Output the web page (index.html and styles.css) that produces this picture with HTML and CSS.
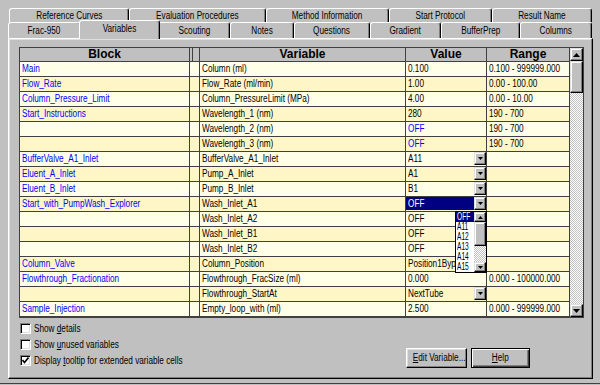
FILE: index.html
```html
<!DOCTYPE html>
<html>
	<head>
		<meta http-equiv="content-type" content="text/html;charset=UTF-8" />
		<link rel="stylesheet" href="styles.css">
	</head>

	<body>
		<div class="window">
			<div class="tabs">
				<div class="tabRow back">
					<span class="tab tRef"><span class="t">Reference Curves</span></span>
					<span class="tab tEval"><span class="t">Evaluation Procedures</span></span>
					<span class="tab tMeth"><span class="t">Method Information</span></span>
					<span class="tab tStart"><span class="t">Start Protocol</span></span>
					<span class="tab tRes"><span class="t">Result Name</span></span>
				</div>
				<div class="tabRow front">
					<span class="tab tFrac"><span class="t">Frac-950</span></span>
					<span class="tab tVar active"><span class="t">Variables</span></span>
					<span class="tab tScout"><span class="t">Scouting</span></span>
					<span class="tab tNotes"><span class="t">Notes</span></span>
					<span class="tab tQuest"><span class="t">Questions</span></span>
					<span class="tab tGrad"><span class="t">Gradient</span></span>
					<span class="tab tBuf"><span class="t">BufferPrep</span></span>
					<span class="tab tCol"><span class="t">Columns</span></span>
				</div>
			</div>
			<div class="panel">
				<div class="grid">
					<div class="table">
						<div class="row head">
							<span class="cell">Block</span>
							<span class="cell"></span>
							<span class="cell">Variable</span>
							<span class="cell">Value</span>
							<span class="cell">Range</span>
						</div>
						<div class="row">
							<span class="cell blk"><span class="t">Main</span></span>
							<span class="cell"></span>
							<span class="cell"><span class="t">Column (ml)</span></span>
							<span class="cell"><span class="t">0.100</span></span>
							<span class="cell"><span class="t">0.100 - 999999.000</span></span>
						</div>
						<div class="row">
							<span class="cell blk"><span class="t">Flow_Rate</span></span>
							<span class="cell"></span>
							<span class="cell"><span class="t">Flow_Rate (ml/min)</span></span>
							<span class="cell"><span class="t">1.00</span></span>
							<span class="cell"><span class="t">0.00 - 100.00</span></span>
						</div>
						<div class="row">
							<span class="cell blk"><span class="t">Column_Pressure_Limit</span></span>
							<span class="cell"></span>
							<span class="cell"><span class="t">Column_PressureLimit (MPa)</span></span>
							<span class="cell"><span class="t">4.00</span></span>
							<span class="cell"><span class="t">0.00 - 10.00</span></span>
						</div>
						<div class="row">
							<span class="cell blk"><span class="t">Start_Instructions</span></span>
							<span class="cell"></span>
							<span class="cell"><span class="t">Wavelength_1 (nm)</span></span>
							<span class="cell"><span class="t">280</span></span>
							<span class="cell"><span class="t">190 - 700</span></span>
						</div>
						<div class="row">
							<span class="cell"></span>
							<span class="cell"></span>
							<span class="cell"><span class="t">Wavelength_2 (nm)</span></span>
							<span class="cell blk"><span class="t">OFF</span></span>
							<span class="cell"><span class="t">190 - 700</span></span>
						</div>
						<div class="row">
							<span class="cell"></span>
							<span class="cell"></span>
							<span class="cell"><span class="t">Wavelength_3 (nm)</span></span>
							<span class="cell blk"><span class="t">OFF</span></span>
							<span class="cell"><span class="t">190 - 700</span></span>
						</div>
						<div class="row">
							<span class="cell blk"><span class="t">BufferValve_A1_Inlet</span></span>
							<span class="cell"></span>
							<span class="cell"><span class="t">BufferValve_A1_Inlet</span></span>
							<span class="cell combo"><span class="txt"><span class="t">A11</span></span><span class="ddBtn"><svg width="5" height="3"><polygon points="0,0 5,0 2.5,3"/></svg></span></span>
							<span class="cell"></span>
						</div>
						<div class="row">
							<span class="cell blk"><span class="t">Eluent_A_Inlet</span></span>
							<span class="cell"></span>
							<span class="cell"><span class="t">Pump_A_Inlet</span></span>
							<span class="cell combo"><span class="txt"><span class="t">A1</span></span><span class="ddBtn"><svg width="5" height="3"><polygon points="0,0 5,0 2.5,3"/></svg></span></span>
							<span class="cell"></span>
						</div>
						<div class="row">
							<span class="cell blk"><span class="t">Eluent_B_Inlet</span></span>
							<span class="cell"></span>
							<span class="cell"><span class="t">Pump_B_Inlet</span></span>
							<span class="cell combo"><span class="txt"><span class="t">B1</span></span><span class="ddBtn"><svg width="5" height="3"><polygon points="0,0 5,0 2.5,3"/></svg></span></span>
							<span class="cell"></span>
						</div>
						<div class="row">
							<span class="cell blk"><span class="t">Start_with_PumpWash_Explorer</span></span>
							<span class="cell"></span>
							<span class="cell"><span class="t">Wash_Inlet_A1</span></span>
							<span class="cell combo sel"><span class="txt"><span class="t">OFF</span></span><span class="ddBtn"><svg width="5" height="3"><polygon points="0,0 5,0 2.5,3"/></svg></span></span>
							<span class="cell"></span>
						</div>
						<div class="row">
							<span class="cell"></span>
							<span class="cell"></span>
							<span class="cell"><span class="t">Wash_Inlet_A2</span></span>
							<span class="cell"><span class="t">OFF</span></span>
							<span class="cell"></span>
						</div>
						<div class="row">
							<span class="cell"></span>
							<span class="cell"></span>
							<span class="cell"><span class="t">Wash_Inlet_B1</span></span>
							<span class="cell"><span class="t">OFF</span></span>
							<span class="cell"></span>
						</div>
						<div class="row">
							<span class="cell"></span>
							<span class="cell"></span>
							<span class="cell"><span class="t">Wash_Inlet_B2</span></span>
							<span class="cell"><span class="t">OFF</span></span>
							<span class="cell"></span>
						</div>
						<div class="row">
							<span class="cell blk"><span class="t">Column_Valve</span></span>
							<span class="cell"></span>
							<span class="cell"><span class="t">Column_Position</span></span>
							<span class="cell"><span class="t">Position1Byp</span></span>
							<span class="cell"></span>
						</div>
						<div class="row">
							<span class="cell blk"><span class="t">Flowthrough_Fractionation</span></span>
							<span class="cell"></span>
							<span class="cell"><span class="t">Flowthrough_FracSize (ml)</span></span>
							<span class="cell"><span class="t">0.000</span></span>
							<span class="cell"><span class="t">0.000 - 100000.000</span></span>
						</div>
						<div class="row">
							<span class="cell"></span>
							<span class="cell"></span>
							<span class="cell"><span class="t">Flowthrough_StartAt</span></span>
							<span class="cell combo"><span class="txt"><span class="t">NextTube</span></span><span class="ddBtn"><svg width="5" height="3"><polygon points="0,0 5,0 2.5,3"/></svg></span></span>
							<span class="cell"></span>
						</div>
						<div class="row">
							<span class="cell blk"><span class="t">Sample_Injection</span></span>
							<span class="cell"></span>
							<span class="cell"><span class="t">Empty_loop_with (ml)</span></span>
							<span class="cell"><span class="t">2.500</span></span>
							<span class="cell"><span class="t">0.000 - 999999.000</span></span>
						</div>
					</div>
					<div class="vscroll">
						<span class="sBtn"><svg width="7" height="4"><polygon points="0,4 7,4 3.5,0"/></svg></span>
						<span class="thumb"></span>
						<span class="track"></span>
						<span class="sBtn"><svg width="7" height="4"><polygon points="0,0 7,0 3.5,4"/></svg></span>
					</div>
					<div class="dropList">
						<div class="items">
							<span class="on"><span class="t">OFF</span></span>
							<span><span class="t">A11</span></span>
							<span><span class="t">A12</span></span>
							<span><span class="t">A13</span></span>
							<span><span class="t">A14</span></span>
							<span><span class="t">A15</span></span>
						</div>
						<div class="miniScroll">
							<span class="mBtn"><svg width="5" height="3"><polygon points="0,3 5,3 2.5,0"/></svg></span>
							<span class="mThumb"></span>
							<span class="track"></span>
							<span class="mBtn"><svg width="5" height="3"><polygon points="0,0 5,0 2.5,3"/></svg></span>
						</div>
					</div>
				</div>
				<div class="bottom">
					<div class="checks">
						<label class="check"><span class="box"></span><span class="t">Show <u>d</u>etails</span></label>
						<label class="check"><span class="box"></span><span class="t">Show <u>u</u>nused variables</span></label>
						<label class="check"><span class="box"><svg width="7" height="7"><polyline points="0.5,3 2.5,5.5 6.5,0.5" fill="none" stroke="#000" stroke-width="1.6"/></svg></span><span class="t">Display <u>t</u>ooltip for extended variable cells</span></label>
					</div>
					<div class="buttons">
						<span class="btn edit"><span class="t"><u>E</u>dit Variable...</span></span>
						<span class="btn help"><span class="t"><u>H</u>elp</span></span>
					</div>
				</div>
			</div>
		</div>
	</body>
</html>
```

FILE: styles.css
```css
body{
	margin:0;
	background-color:#c0c0c0;
	font-family:"Liberation Sans",Arial,sans-serif;
	font-size:10px;
	color:#000;
}
/* the dialog font is a narrow one: squeeze the sans text to its width */
.t{
	display:inline-block;
	transform:scaleX(.82);
	transform-origin:0 50%;
	white-space:nowrap;
}
.window{
	width:600px;
	height:385px;
	overflow:hidden;
	box-shadow:inset 0 -1px #c0c0c0, inset 0 -2px #404040;
}

/* tabs */
.tabs{
	padding-top:8px;
	height:30px;
}
.tabRow{
	display:flex;
}
.tabRow.back{
	margin-left:9px;
	height:14px;
}
.tabRow.front{
	margin-left:8px;
	height:16px;
}
.tab{
	box-sizing:border-box;
	height:100%;
	border-top:1px solid #fff;
	border-left:1px solid #fff;
	border-right:1px solid #000;
	border-radius:3px 3px 0 0;
	box-shadow:inset -1px 0 #808080;
	text-align:center;
	white-space:nowrap;
}
.tab .t{
	transform-origin:50% 50%;
}
.back .tab{
	line-height:12px;
	padding-top:1px;
}
.front .tab{
	line-height:15px;
}
.tab.active{
	position:relative;
	z-index:2;
	height:19px;
	margin:-2px -2px 0 -2px;
	background-color:#c0c0c0;
}
.tRef{width:120px;}
.tEval{width:137px;}
.tMeth{width:123px;}
.tStart{width:103px;}
.tRes{width:100px;}
.tFrac{width:73px;}
.tVar{width:81px;}
.tScout{width:72px;}
.tNotes{width:64px;}
.tQuest{width:76px;}
.tGrad{width:71px;}
.tBuf{width:79px;}
.tCol{width:72px;}

/* page */
.panel{
	margin-left:8px;
	width:585px;
	box-sizing:border-box;
	padding:8px 8px 10px 10px;
	border:1px solid;
	border-color:#fff #000 #000 #fff;
	box-shadow:inset -1px -1px #808080, inset 1px 1px #dfdfdf;
}

/* grid */
.grid{
	position:relative;
	display:flex;
	border:1px solid #404040;
}
.table{
	width:550px;
}
.row{
	display:grid;
	grid-template-columns:170px 10px 206px 81px 83px;
	height:15px;
	background-color:#ffffe8;
}
.row:nth-child(odd){
	background-color:#fff6c8;
}
.row.head{
	height:14px;
	background-color:#c0c0c0;
	font-weight:bold;
	font-size:12px;
}
.cell{
	box-sizing:border-box;
	border-right:1px solid #404040;
	border-bottom:1px solid #404040;
	padding:0 2px;
	line-height:14px;
	white-space:nowrap;
	overflow:hidden;
}
.head .cell{
	text-align:center;
	line-height:13px;
}
.head .cell:nth-child(2){
	box-shadow:inset 2px 0 #c0c0c0, inset 3px 0 #404040;
}
.blk{
	color:#0000ff;
}
.cell.combo{
	display:flex;
	padding:0;
}
.combo .txt{
	flex-grow:1;
	padding-left:2px;
}
.combo.sel .txt{
	background-color:#000080;
	color:#fff;
	margin-bottom:1px;
	line-height:13px;
}
.ddBtn,.sBtn,.mBtn{
	box-sizing:border-box;
	display:flex;
	justify-content:center;
	align-items:center;
	background-color:#c0c0c0;
	border:1px solid;
	border-color:#dfdfdf #000 #000 #dfdfdf;
	box-shadow:inset -1px -1px #808080, inset 1px 1px #fff;
	flex-shrink:0;
}
.ddBtn{
	width:12px;
	height:13px;
}
.vscroll{
	width:13px;
	display:flex;
	flex-direction:column;
}
.sBtn{
	height:13px;
}
.thumb{
	height:32px;
	box-sizing:border-box;
	background-color:#c0c0c0;
	border:1px solid;
	border-color:#dfdfdf #000 #000 #dfdfdf;
	box-shadow:inset -1px -1px #808080, inset 1px 1px #fff;
}
.track{
	flex-grow:1;
	background-color:#fff;
	background-image:repeating-conic-gradient(#c0c0c0 0 25%, #fff 0 50%);
	background-size:2px 2px;
}

/* open combo list */
.dropList{
	position:absolute;
	left:435px;
	top:163px;
	width:32px;
	height:62px;
	box-sizing:border-box;
	border:1px solid #000;
	background-color:#fff;
	display:flex;
}
.items{
	width:18px;
	overflow:hidden;
	font-size:10px;
	line-height:10px;
}
.items > span{
	display:block;
	height:10px;
	padding-left:1px;
}
.items .t{
	transform:scaleX(.66);
}
.items .on{
	background-color:#000080;
	color:#fff;
}
.miniScroll{
	width:12px;
	display:flex;
	flex-direction:column;
}
.mBtn{
	height:10px;
}
.mThumb{
	height:24px;
	box-sizing:border-box;
	background-color:#c0c0c0;
	border:1px solid;
	border-color:#dfdfdf #000 #000 #dfdfdf;
	box-shadow:inset -1px -1px #808080, inset 1px 1px #fff;
}

/* checkboxes and buttons */
.bottom{
	display:flex;
	margin-top:2px;
	height:48px;
}
.checks{
	display:flex;
	flex-direction:column;
	width:200px;
}
.check{
	display:flex;
	align-items:center;
	height:16px;
	white-space:nowrap;
}
.box{
	width:11px;
	height:11px;
	box-sizing:border-box;
	margin:0 3px 0 1px;
	background-color:#fff;
	border:1px solid;
	border-color:#808080 #fff #fff #808080;
	box-shadow:inset 1px 1px #000, inset -1px -1px #dfdfdf;
	display:flex;
	justify-content:center;
	align-items:center;
	flex-shrink:0;
}
.buttons{
	margin-left:auto;
	margin-right:54px;
	align-self:flex-end;
	display:flex;
	gap:4px;
}
.btn{
	height:20px;
	box-sizing:border-box;
	border:1px solid;
	border-color:#fff #000 #000 #fff;
	box-shadow:inset -1px -1px #808080, inset 1px 1px #dfdfdf;
	text-align:center;
	line-height:18px;
	white-space:nowrap;
}
.btn .t{
	transform-origin:50% 50%;
}
.btn.edit{
	width:61px;
}
.btn.help{
	width:59px;
	border-color:#000;
	box-shadow:inset 1px 1px #fff, inset -1px -1px #404040, inset -2px -2px #808080;
}
```
